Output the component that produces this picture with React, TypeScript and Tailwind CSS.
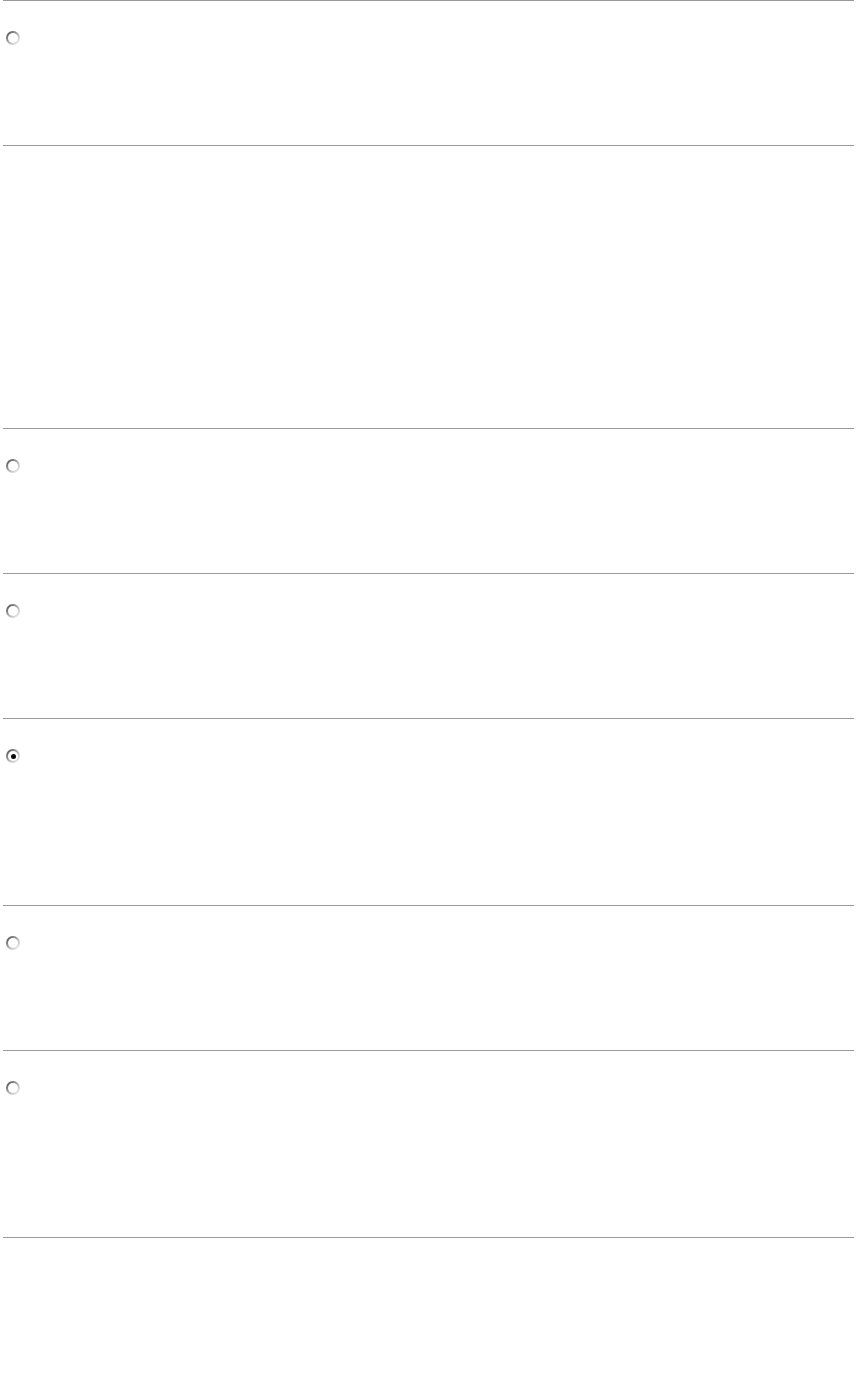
import React from "react";

type Row = { h: string; radio: boolean; checked?: boolean };

function Radio({ checked }: { checked?: boolean }) {
  return (
    <div className="ml-[3px] mt-[30px] h-[14px] w-[14px] rounded-full bg-[linear-gradient(135deg,#4f4f4f_10%,#b0b0b0_50%,#f0f0f0_90%)] p-[2px]">
      <div className="flex h-full w-full items-center justify-center rounded-full bg-white">
        {checked && <div className="h-[5px] w-[5px] rounded-full bg-[#0a0a0a]" />}
      </div>
    </div>
  );
}

export default function App() {
  const rows: Row[] = [
    { h: "h-[145px]", radio: true },
    { h: "h-[283px]", radio: false },
    { h: "h-[145px]", radio: true },
    { h: "h-[145px]", radio: true },
    { h: "h-[187px]", radio: true, checked: true },
    { h: "h-[145px]", radio: true },
    { h: "h-[187px]", radio: true },
    { h: "h-[137px]", radio: false },
  ];
  return (
    <div className="min-h-[1374px] w-full bg-white px-[3px] font-['Liberation_Sans',sans-serif]">
      {rows.map((r, i) => (
        <div key={i} className={`${r.h} border-t border-[#999999] flex flex-col`}>
          {r.radio && <Radio checked={r.checked} />}
        </div>
      ))}
    </div>
  );
}
